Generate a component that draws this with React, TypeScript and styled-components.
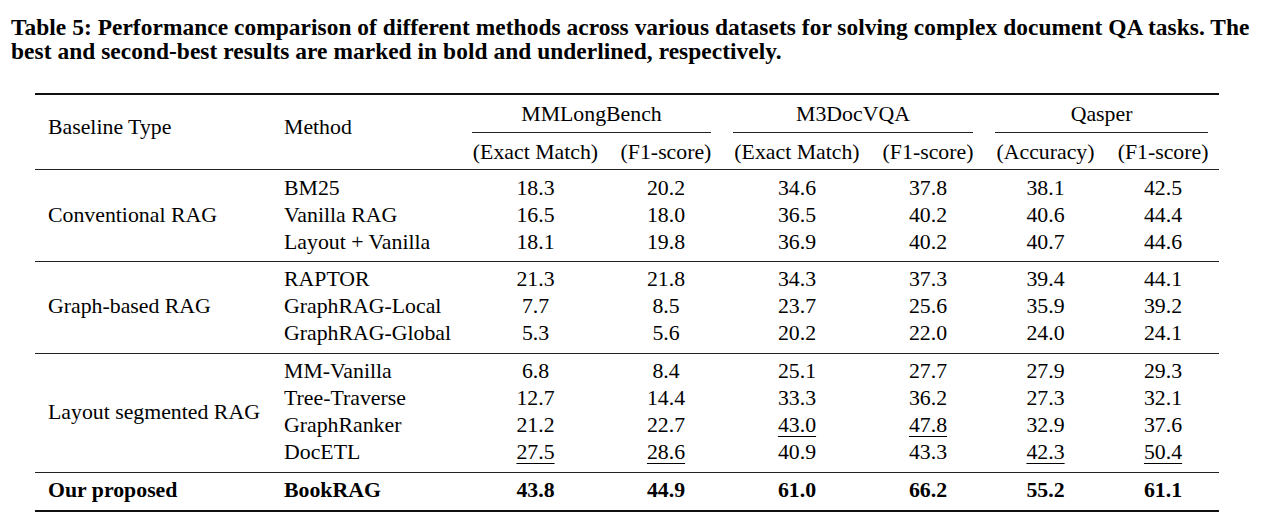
import React from "react";
import styled, { createGlobalStyle } from "styled-components";

const GlobalStyle = createGlobalStyle`
  html, body { margin: 0; padding: 0; background: #fff; }
  body {
    font-family: "Liberation Serif", "Times New Roman", serif;
    color: #000;
  }
`;

const Page = styled.div`
  width: 1265px;
  box-sizing: border-box;
  padding: 15px 4px 0 11px;
`;

const Caption = styled.p`
  margin: 0;
  font-weight: 700;
  font-size: 23.4px;
  line-height: 24px;
  letter-spacing: 0.05px;
`;

const CaptionLine = styled.span`
  display: block;
  white-space: nowrap;
`;

const Table = styled.table`
  margin: 30px 0 0 24px;
  border-collapse: collapse;
  table-layout: fixed;
  width: 1184px;
  font-size: 21.8px;
  line-height: 27px;
  border-top: 2px solid #111;
  border-bottom: 2px solid #111;
`;

const Col = styled.col<{ $w: number }>`
  width: ${(p) => p.$w}px;
`;

const Body = styled.tbody`
  border-top: 1px solid #222;
`;

const HeadCell = styled.th<{ $left?: boolean; $lift?: boolean }>`
  font-weight: 400;
  text-align: ${(p) => (p.$left ? "left" : "center")};
  vertical-align: middle;
  white-space: nowrap;
  padding: ${(p) => (p.$lift ? "0 13px 9px" : "6px 0 3px")};
`;

const GroupHeadCell = styled.th`
  font-weight: 400;
  padding: 6px 11px 0;
  white-space: nowrap;
`;

const GroupRule = styled.div`
  padding-bottom: 4px;
  border-bottom: 1px solid #222;
`;

const Cell = styled.td<{
  $left?: boolean;
  $bold?: boolean;
  $pt: number;
  $pb: number;
}>`
  text-align: ${(p) => (p.$left ? "left" : "center")};
  font-weight: ${(p) => (p.$bold ? 700 : 400)};
  vertical-align: middle;
  white-space: nowrap;
  padding: ${(p) => `${p.$pt}px 13px ${p.$pb}px`};
`;

const Under = styled.span`
  text-decoration: underline;
  text-decoration-thickness: 1px;
  text-underline-offset: 4px;
`;

type Val = { v: string; u?: boolean };
type Row = { method: string; vals: Val[] };
type Group = { type: string; rows: Row[]; bold?: boolean; pt: number; pb: number };

const r = (method: string, ...vals: (string | Val)[]): Row => ({
  method,
  vals: vals.map((x) => (typeof x === "string" ? { v: x } : x)),
});
const u = (v: string): Val => ({ v, u: true });

const groups: Group[] = [
  {
    type: "Conventional RAG",
    pt: 5,
    pb: 5,
    rows: [
      r("BM25", "18.3", "20.2", "34.6", "37.8", "38.1", "42.5"),
      r("Vanilla RAG", "16.5", "18.0", "36.5", "40.2", "40.6", "44.4"),
      r("Layout + Vanilla", "18.1", "19.8", "36.9", "40.2", "40.7", "44.6"),
    ],
  },
  {
    type: "Graph-based RAG",
    pt: 4,
    pb: 6,
    rows: [
      r("RAPTOR", "21.3", "21.8", "34.3", "37.3", "39.4", "44.1"),
      r("GraphRAG-Local", "7.7", "8.5", "23.7", "25.6", "35.9", "39.2"),
      r("GraphRAG-Global", "5.3", "5.6", "20.2", "22.0", "24.0", "24.1"),
    ],
  },
  {
    type: "Layout segmented RAG",
    pt: 4,
    pb: 6,
    rows: [
      r("MM-Vanilla", "6.8", "8.4", "25.1", "27.7", "27.9", "29.3"),
      r("Tree-Traverse", "12.7", "14.4", "33.3", "36.2", "27.3", "32.1"),
      r("GraphRanker", "21.2", "22.7", u("43.0"), u("47.8"), "32.9", "37.6"),
      r("DocETL", u("27.5"), u("28.6"), "40.9", "43.3", u("42.3"), u("50.4")),
    ],
  },
  {
    type: "Our proposed",
    bold: true,
    pt: 4,
    pb: 6,
    rows: [r("BookRAG", "43.8", "44.9", "61.0", "66.2", "55.2", "61.1")],
  },
];

const widths = [236, 190, 149, 112, 150, 112, 123, 112];
const datasets = ["MMLongBench", "M3DocVQA", "Qasper"];
const metrics = [
  "(Exact Match)",
  "(F1-score)",
  "(Exact Match)",
  "(F1-score)",
  "(Accuracy)",
  "(F1-score)",
];

export default function App() {
  return (
    <Page>
      <GlobalStyle />
      <Caption>
        <CaptionLine>
          Table 5: Performance comparison of different methods across various datasets for
          solving complex document QA tasks. The
        </CaptionLine>
        <CaptionLine>
          best and second-best results are marked in bold and underlined, respectively.
        </CaptionLine>
      </Caption>
      <Table>
        <colgroup>
          {widths.map((w, i) => (
            <Col key={i} $w={w} />
          ))}
        </colgroup>
        <thead>
          <tr>
            <HeadCell rowSpan={2} $left $lift>
              Baseline Type
            </HeadCell>
            <HeadCell rowSpan={2} $left $lift>
              Method
            </HeadCell>
            {datasets.map((d) => (
              <GroupHeadCell key={d} colSpan={2}>
                <GroupRule>{d}</GroupRule>
              </GroupHeadCell>
            ))}
          </tr>
          <tr>
            {metrics.map((m, i) => (
              <HeadCell key={i}>{m}</HeadCell>
            ))}
          </tr>
        </thead>
        {groups.map((g) => (
          <Body key={g.type}>
            {g.rows.map((row, ri) => {
              const pt = ri === 0 ? g.pt : 0;
              const pb = ri === g.rows.length - 1 ? g.pb : 0;
              return (
                <tr key={row.method}>
                  {ri === 0 && (
                    <Cell rowSpan={g.rows.length} $left $bold={g.bold} $pt={g.pt} $pb={g.pb}>
                      {g.type}
                    </Cell>
                  )}
                  <Cell $left $bold={g.bold} $pt={pt} $pb={pb}>
                    {row.method}
                  </Cell>
                  {row.vals.map((val, vi) => (
                    <Cell key={vi} $bold={g.bold} $pt={pt} $pb={pb}>
                      {val.u ? <Under>{val.v}</Under> : val.v}
                    </Cell>
                  ))}
                </tr>
              );
            })}
          </Body>
        ))}
      </Table>
    </Page>
  );
}
